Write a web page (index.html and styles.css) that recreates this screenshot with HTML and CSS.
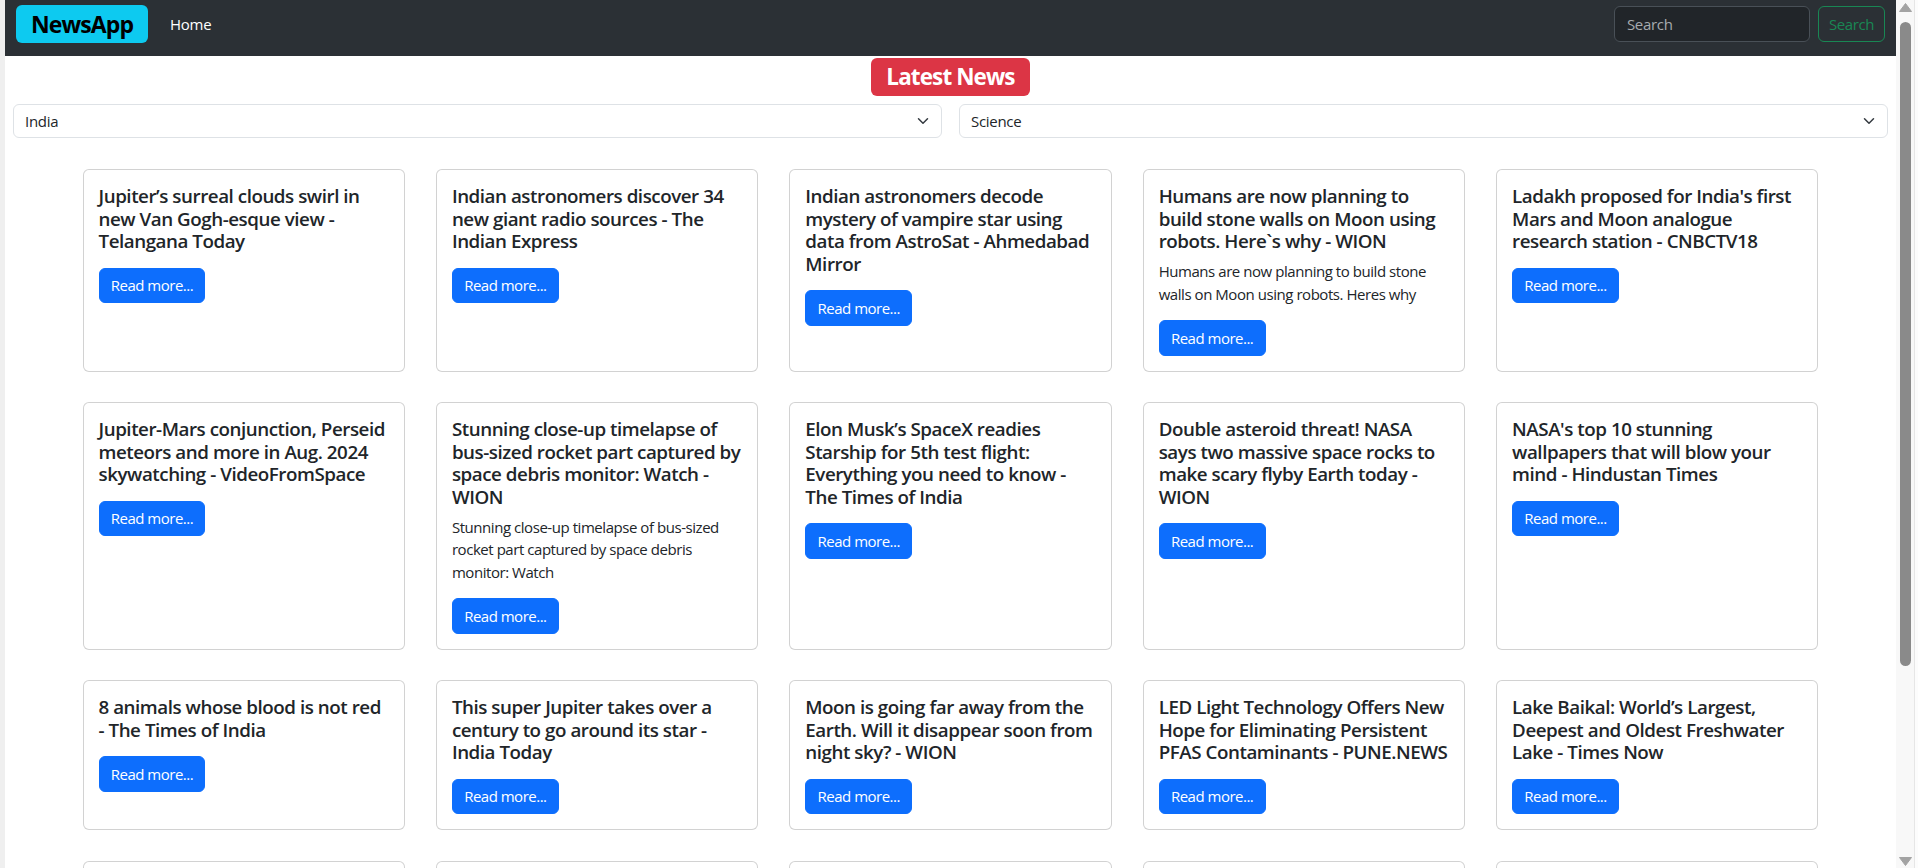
FILE: index.html
```html
<!DOCTYPE html>
<html lang="en">
<head>
<meta charset="utf-8">
<title>NewsApp</title>
<link rel="stylesheet" href="styles.css">
</head>
<body>
<div class="window">
  <div class="edge"></div>
  <div class="page">
    <nav class="navbar">
      <a class="brand" href="#">NewsApp</a>
      <a class="nav-link" href="#">Home</a>
      <form class="search">
        <input class="search-input" type="search" placeholder="Search">
        <button class="search-btn" type="button">Search</button>
      </form>
    </nav>
    <main>
      <div class="heading"><h2 class="title-badge">Latest News</h2></div>
      <div class="filters">
        <div class="select"><span>India</span><svg class="chev" width="16" height="12" viewBox="0 0 16 16"><path d="M2 5l6 6 6-6" fill="none" stroke="#343a40" stroke-width="2" stroke-linecap="round" stroke-linejoin="round"/></svg></div>
        <div class="select"><span>Science</span><svg class="chev" width="16" height="12" viewBox="0 0 16 16"><path d="M2 5l6 6 6-6" fill="none" stroke="#343a40" stroke-width="2" stroke-linecap="round" stroke-linejoin="round"/></svg></div>
      </div>
      <div class="grid">
        <div class="card"><h5 class="card-title solo">Jupiter’s surreal clouds swirl in new Van Gogh-esque view - Telangana Today</h5><a class="btn" href="#">Read more...</a></div>
        <div class="card"><h5 class="card-title solo">Indian astronomers discover 34 new giant radio sources - The Indian Express</h5><a class="btn" href="#">Read more...</a></div>
        <div class="card"><h5 class="card-title solo">Indian astronomers decode mystery of vampire star using data from AstroSat - Ahmedabad Mirror</h5><a class="btn" href="#">Read more...</a></div>
        <div class="card"><h5 class="card-title">Humans are now planning to build stone walls on Moon using robots. Here`s why - WION</h5><p class="card-text">Humans are now planning to build stone walls on Moon using robots. Heres why</p><a class="btn" href="#">Read more...</a></div>
        <div class="card"><h5 class="card-title solo">Ladakh proposed for India's first Mars and Moon analogue research station - CNBCTV18</h5><a class="btn" href="#">Read more...</a></div>

        <div class="card"><h5 class="card-title solo">Jupiter-Mars conjunction, Perseid meteors and more in Aug. 2024 skywatching - VideoFromSpace</h5><a class="btn" href="#">Read more...</a></div>
        <div class="card"><h5 class="card-title">Stunning close-up timelapse of bus-sized rocket part captured by space debris monitor: Watch - WION</h5><p class="card-text">Stunning close-up timelapse of bus-sized rocket part captured by space debris monitor: Watch</p><a class="btn" href="#">Read more...</a></div>
        <div class="card"><h5 class="card-title solo">Elon Musk’s SpaceX readies Starship for 5th test flight: Everything you need to know - The Times of India</h5><a class="btn" href="#">Read more...</a></div>
        <div class="card"><h5 class="card-title solo">Double asteroid threat! NASA says two massive space rocks to make scary flyby Earth today - WION</h5><a class="btn" href="#">Read more...</a></div>
        <div class="card"><h5 class="card-title solo">NASA's top 10 stunning wallpapers that will blow your mind - Hindustan Times</h5><a class="btn" href="#">Read more...</a></div>

        <div class="card"><h5 class="card-title solo">8 animals whose blood is not red - The Times of India</h5><a class="btn" href="#">Read more...</a></div>
        <div class="card"><h5 class="card-title solo">This super Jupiter takes over a century to go around its star - India Today</h5><a class="btn" href="#">Read more...</a></div>
        <div class="card"><h5 class="card-title solo">Moon is going far away from the Earth. Will it disappear soon from night sky? - WION</h5><a class="btn" href="#">Read more...</a></div>
        <div class="card"><h5 class="card-title solo">LED Light Technology Offers New Hope for Eliminating Persistent PFAS Contaminants - PUNE.NEWS</h5><a class="btn" href="#">Read more...</a></div>
        <div class="card"><h5 class="card-title solo">Lake Baikal: World’s Largest, Deepest and Oldest Freshwater Lake - Times Now</h5><a class="btn" href="#">Read more...</a></div>

        <div class="card card-next"></div>
        <div class="card card-next"></div>
        <div class="card card-next"></div>
        <div class="card card-next"></div>
        <div class="card card-next"></div>
      </div>
    </main>
  </div>
  <div class="scrollbar">
    <svg class="arrow" width="13" height="9" viewBox="0 0 13 9"><path d="M6.5 0.5L12.5 8.5H0.5Z" fill="#a3a3a3" stroke="#a3a3a3" stroke-linejoin="round"/></svg>
    <div class="thumb"></div>
    <div class="track-rest"></div>
    <svg class="arrow" width="13" height="9" viewBox="0 0 13 9"><path d="M0.5 0.5H12.5L6.5 8.5Z" fill="#a3a3a3" stroke="#a3a3a3" stroke-linejoin="round"/></svg>
  </div>
</div>
</body>
</html>
```
FILE: styles.css
```css
* { box-sizing: border-box; }

html, body {
  margin: 0;
  height: 100%;
  overflow: hidden;
}

body {
  font-family: "Open Sans", "Noto Sans", sans-serif;
  font-size: 15px;
  line-height: 1.5;
  color: #212529;
  background: #fff;
}

a { text-decoration: none; }

.window {
  display: flex;
  height: 868px;
}

.edge {
  flex: none;
  width: 5px;
  background: #efefef;
}

.page {
  flex: 1;
  min-width: 0;
  overflow: hidden;
  background: #fff;
}

/* navbar */
.navbar {
  height: 56px;
  padding: 0 11px 8px;
  display: flex;
  align-items: center;
  background: #2b3035;
}

.brand {
  height: 38px;
  line-height: 38px;
  padding: 0 15px;
  background: #0dcaf0;
  color: #000;
  font-weight: 700;
  font-size: 23px;
  letter-spacing: -0.9px;
  border-radius: 6px;
}

.nav-link {
  margin-left: 22px;
  color: #fff;
  font-size: 15px;
  letter-spacing: -0.3px;
}

.search {
  margin: 0 0 0 auto;
  display: flex;
  gap: 8px;
}

.search-input {
  width: 196px;
  height: 36px;
  background: #212529;
  border: 1px solid #495057;
  border-radius: 6px;
  color: #dee2e6;
  padding: 0 12px;
  font: inherit;
  letter-spacing: -0.3px;
  outline: none;
}

.search-input::placeholder { color: #a7abaf; }

.search-btn {
  height: 36px;
  padding: 0 10px;
  border: 1px solid #198754;
  color: #198754;
  background: transparent;
  border-radius: 6px;
  font: inherit;
  letter-spacing: -0.4px;
}

/* heading + filters */
.heading {
  display: flex;
  justify-content: center;
  margin-top: 2px;
}

.title-badge {
  margin: 0;
  height: 38px;
  line-height: 38px;
  padding: 0 15px;
  background: #dc3545;
  color: #fff;
  font-size: 22.5px;
  font-weight: 700;
  letter-spacing: -0.9px;
  border-radius: 6px;
}

.filters {
  display: flex;
  gap: 17px;
  padding: 0 8px;
  margin-top: 8px;
}

.select {
  flex: 1;
  height: 34px;
  border: 1px solid #dee2e6;
  border-radius: 6px;
  display: flex;
  align-items: center;
  justify-content: space-between;
  padding: 0 10px 0 11px;
  letter-spacing: -0.3px;
}

.chev { display: block; }

/* cards */
.grid {
  display: grid;
  grid-template-columns: repeat(5, 1fr);
  column-gap: 31px;
  row-gap: 30.5px;
  padding: 0 77.5px;
  margin-top: 31px;
}

.card {
  display: flex;
  flex-direction: column;
  align-items: flex-start;
  border: 1px solid rgba(0, 0, 0, 0.175);
  border-radius: 6px;
  padding: 15px;
  background: #fff;
}

.card-next { min-height: 120px; }

.card-title {
  margin: 0 0 7.5px;
  font-size: 18.75px;
  font-weight: 600;
  line-height: 22.5px;
  letter-spacing: -0.45px;
}

.card-title.solo { margin-bottom: 15px; }

.card-text {
  margin: 0 0 15px;
  line-height: 22.5px;
  letter-spacing: -0.45px;
}

.btn {
  display: inline-block;
  background: #0d6efd;
  color: #fff;
  border: 1px solid #0d6efd;
  border-radius: 6px;
  padding: 5.5px 11.25px;
  line-height: 22.5px;
  letter-spacing: -0.5px;
}

/* fake scrollbar */
.scrollbar {
  flex: none;
  width: 22px;
  display: flex;
  flex-direction: column;
  background: #f8f8f8;
  border-right: 3px solid #fcfcfc;
  box-shadow: inset -1px 0 0 #e6e6e6;
  padding: 3px 0 2px 3px;
}

.arrow { display: block; flex: none; }

.thumb {
  flex: none;
  width: 11px;
  height: 644px;
  margin: 10px 0 0 1px;
  background: #8a8a8a;
  border-radius: 6px;
}

.track-rest { flex: 1; }
```
